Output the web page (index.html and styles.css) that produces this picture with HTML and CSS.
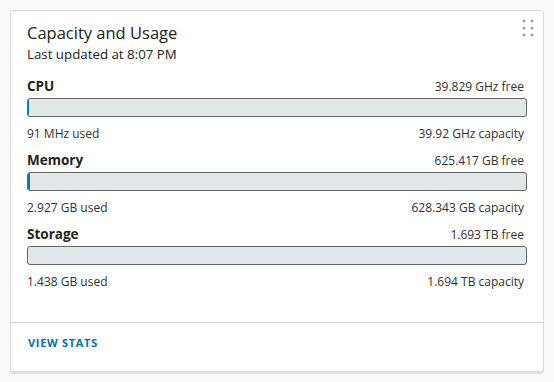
FILE: index.html
```html
<!DOCTYPE html>
<html lang="en">
<head>
  <meta charset="UTF-8">
  <meta name="viewport" content="width=device-width, initial-scale=1.0">
  <title>Capacity and Usage</title>
  <link rel="stylesheet" href="styles.css">
</head>
<body>
  <div class="card">
    <div class="card-block">
      <div class="card-header">
        <div>
          <h3 class="card-title">Capacity and Usage</h3>
          <div class="card-subtitle">Last updated at 8:07 PM</div>
        </div>
        <svg class="drag-icon" width="12" height="18" viewBox="0 0 12 18">
          <circle cx="2" cy="2" r="1.6"/>
          <circle cx="10" cy="2" r="1.6"/>
          <circle cx="2" cy="9" r="1.6"/>
          <circle cx="10" cy="9" r="1.6"/>
          <circle cx="2" cy="16" r="1.6"/>
          <circle cx="10" cy="16" r="1.6"/>
        </svg>
      </div>

      <div class="usage">
        <div class="usage-top">
          <span class="usage-name">CPU</span>
          <span>39.829 GHz free</span>
        </div>
        <div class="bar"><div class="bar-fill" style="width: 0.3%"></div></div>
        <div class="usage-bottom">
          <span>91 MHz used</span>
          <span>39.92 GHz capacity</span>
        </div>
      </div>

      <div class="usage">
        <div class="usage-top">
          <span class="usage-name">Memory</span>
          <span>625.417 GB free</span>
        </div>
        <div class="bar"><div class="bar-fill" style="width: 0.5%"></div></div>
        <div class="usage-bottom">
          <span>2.927 GB used</span>
          <span>628.343 GB capacity</span>
        </div>
      </div>

      <div class="usage">
        <div class="usage-top">
          <span class="usage-name">Storage</span>
          <span>1.693 TB free</span>
        </div>
        <div class="bar"><div class="bar-fill" style="width: 0%"></div></div>
        <div class="usage-bottom">
          <span>1.438 GB used</span>
          <span>1.694 TB capacity</span>
        </div>
      </div>
    </div>

    <div class="card-footer">
      <a class="footer-link" href="#">View Stats</a>
    </div>
  </div>
</body>
</html>
```

FILE: styles.css
```css
* {
  box-sizing: border-box;
}
html, body {
  height: 100%;
}
body {
  margin: 0;
  padding: 10px;
  background: #fafafa;
  font-family: "Open Sans", "Liberation Sans", Arial, sans-serif;
  color: #313131;
  display: flex;
  flex-direction: column;
}
.card {
  flex: 1;
  display: flex;
  flex-direction: column;
  background: #fff;
  border: 1px solid #d7dbe0;
  border-radius: 3px;
  box-shadow: 0 2px 0 #dde1e5;
}
.card-block {
  flex: 1;
  padding: 10px 16px 0 16px;
}
.card-header {
  display: flex;
  justify-content: space-between;
  align-items: flex-start;
  margin-bottom: 14px;
}
.card-title {
  margin: 0;
  font-size: 16.5px;
  font-weight: 400;
  line-height: 24px;
  color: #222;
}
.card-subtitle {
  font-size: 13.3px;
  line-height: 18px;
  color: #222;
}
.drag-icon {
  fill: #a3a9ae;
  margin-top: -2px;
  margin-right: -7px;
}
.usage {
  margin-bottom: 8px;
}
.usage-top,
.usage-bottom {
  display: flex;
  justify-content: space-between;
  align-items: baseline;
  font-size: 12px;
  line-height: 18px;
  padding-right: 3px;
}
.usage-name {
  font-size: 13.5px;
  font-weight: 700;
  color: #222;
}
.bar {
  height: 19px;
  margin-top: 2px;
  background: #e2e7ea;
  border: 1px solid #666;
  border-radius: 3px;
  overflow: hidden;
}
.bar-fill {
  height: 100%;
  background: #0079b8;
}
.usage-bottom {
  margin-top: 8px;
}
.card-footer {
  border-top: 1px solid #ccd3da;
  padding: 9px 16px 19px 17px;
  line-height: 18px;
}
.footer-link {
  color: #0072a3;
  font-size: 11px;
  font-weight: 700;
  text-transform: uppercase;
  letter-spacing: 0.7px;
  text-decoration: none;
}
```
